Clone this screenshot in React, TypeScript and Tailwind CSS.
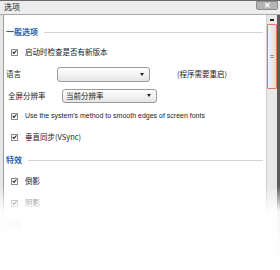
import React from "react";

const cjk = { fontFamily: '"Noto Sans CJK SC", "Liberation Sans", sans-serif' };

function Check() {
  return (
    <div className="w-[7px] h-[7px] border border-[#8a8a8a] bg-white flex items-center justify-center shrink-0">
      <svg width="6" height="6" viewBox="0 0 6 6">
        <path d="M0.8 3 L2.4 4.6 L5.3 1.2" stroke="#222" strokeWidth="1.3" fill="none" />
      </svg>
    </div>
  );
}

function Arrow() {
  return (
    <svg width="4" height="3" viewBox="0 0 4 3">
      <path d="M0 0 H4 L2 3 Z" fill="#222" />
    </svg>
  );
}

export default function App() {
  return (
    <div className="relative w-[280px] h-[270px] overflow-hidden bg-white" style={cjk}>
      <div className="h-[15px] bg-[#ededed] border-t border-[#6a6a6a] border-b border-b-[#a8a8a8] flex items-start justify-between pl-[4px]">
        <span className="text-[8px] leading-[12px] text-[#222]">选项</span>
        <div className="mr-[2px] w-[22px] h-[9px] bg-[#b4b4b4] border border-[#8e8e8e] rounded-b-[2px] flex items-center justify-center">
          <span className="text-white text-[8px] leading-none font-bold" style={{ fontFamily: '"Liberation Sans", sans-serif' }}>✕</span>
        </div>
      </div>
      <div className="flex h-[255px]">
        <div className="w-[4px] bg-[#e6e6e6] border-r border-[#9c9c9c]" />
        <div className="flex-1 flex flex-col pl-[2px] pr-[3px] text-[#222]">
          <div className="mt-[11px] h-[12px] flex items-center gap-[6px]">
            <span className="text-[8px] font-bold text-[#2a5ea8]">一般选项</span>
            <div className="flex-1 h-px bg-[#d4d4d4]" />
          </div>
          <div className="mt-[8px] h-[12px] flex items-center pl-[5px] gap-[7px]">
            <Check />
            <span className="text-[7.5px]">启动时检查是否有新版本</span>
          </div>
          <div className="mt-[8px] h-[16px] flex items-center">
            <span className="text-[7.5px] w-[51px]">语言</span>
            <div className="w-[93px] h-[15px] rounded-[3px] border border-[#9a9a9a] bg-gradient-to-b from-white to-[#e6e6e6] flex items-center justify-end pr-[5px]">
              <Arrow />
            </div>
            <span className="ml-[27px] text-[7.5px]">(程序需要重启)</span>
          </div>
          <div className="mt-[6px] h-[15px] flex items-center">
            <span className="text-[7.5px] w-[56px] pl-[2px]">全屏分辨率</span>
            <div className="w-[95px] h-[14px] rounded-[3px] border border-[#9a9a9a] bg-gradient-to-b from-white to-[#e6e6e6] flex items-center justify-between pl-[3px] pr-[5px]">
              <span className="text-[7.5px]">当前分辨率</span>
              <Arrow />
            </div>
          </div>
          <div className="mt-[7px] h-[12px] flex items-center pl-[5px] gap-[7px]">
            <Check />
            <span className="text-[7px]" style={{ fontFamily: '"Liberation Sans", sans-serif' }}>Use the system's method to smooth edges of screen fonts</span>
          </div>
          <div className="mt-[9px] h-[12px] flex items-center pl-[5px] gap-[7px]">
            <Check />
            <span className="text-[7.5px]">垂直同步(VSync)</span>
          </div>
          <div className="mt-[11px] h-[12px] flex items-center gap-[6px]">
            <span className="text-[8px] font-bold text-[#2a5ea8]">特效</span>
            <div className="flex-1 h-px bg-[#d4d4d4]" />
          </div>
          <div className="mt-[9px] h-[12px] flex items-center pl-[5px] gap-[7px]">
            <Check />
            <span className="text-[7.5px]">倒影</span>
          </div>
          <div className="mt-[10px] h-[12px] flex items-center pl-[5px] gap-[7px]">
            <Check />
            <span className="text-[7.5px]">阴影</span>
          </div>
          <div className="mt-[10px] h-[12px] flex items-center gap-[6px]">
            <span className="text-[8px] font-bold text-[#2a5ea8]">界面</span>
            <div className="flex-1 h-px bg-[#d4d4d4]" />
          </div>
        </div>
        <div className="w-[11px] bg-[#e8e8e8] border-l border-[#d0d0d0] flex flex-col items-center pt-[2px]">
          <div className="w-[9px] h-[6px] flex items-center justify-center">
            <div className="w-[4px] h-[2px] bg-[#222]" />
          </div>
          <div className="mt-[1px] w-[10px] h-[65px] border border-[#e27a5c] bg-gradient-to-r from-[#f4f4f4] to-[#dcdcdc] rounded-[1px] flex flex-col items-center justify-center gap-[1px]">
            <div className="w-[4px] h-px bg-[#9a9a9a]" />
            <div className="w-[4px] h-px bg-[#9a9a9a]" />
          </div>
        </div>
        <div className="w-[3px] bg-[#5a5a5a]" />
      </div>
      <div className="absolute left-0 right-0 top-[186px] h-[84px] bg-gradient-to-b from-white/0 via-white/95 via-30% to-white" />
    </div>
  );
}
